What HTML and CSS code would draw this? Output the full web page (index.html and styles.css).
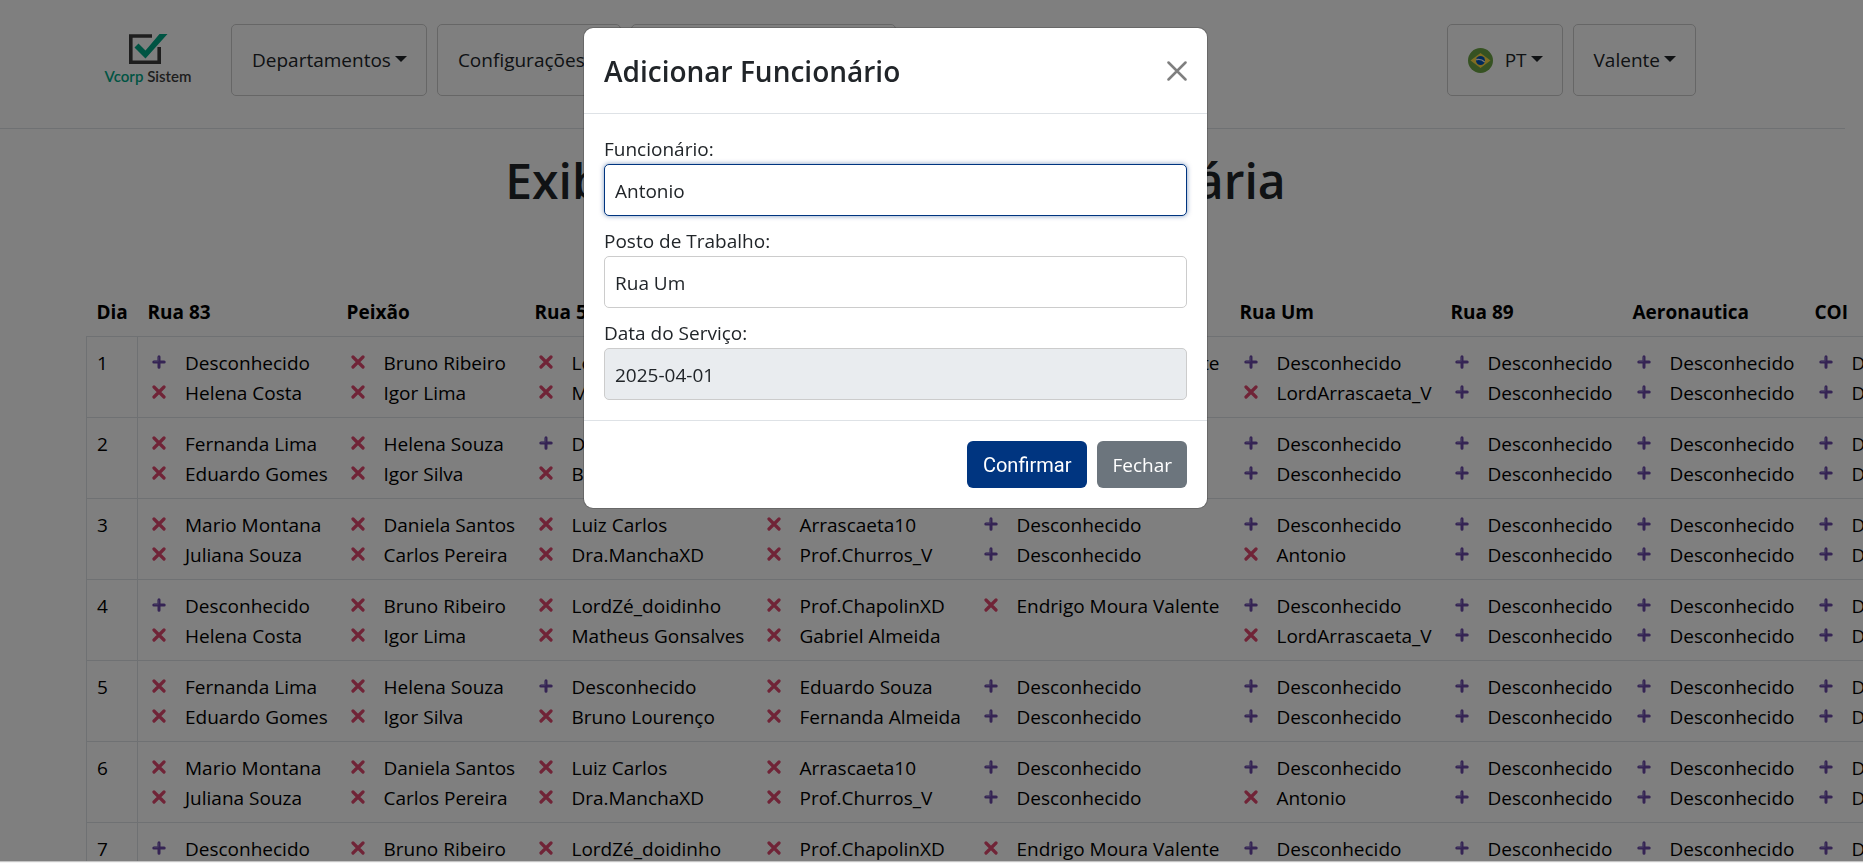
FILE: index.html
```html
<!DOCTYPE html>
<html lang="pt-BR">
<head>
<meta charset="utf-8">
<title>Vcorp Sistem</title>
<link rel="stylesheet" href="styles.css">
</head>
<body>
<svg class="sprite" aria-hidden="true">
  <symbol id="remove" viewBox="0 0 14 14"><path d="M2 2 12 12M12 2 2 12" fill="none" stroke="#e0486e" stroke-width="3.2" stroke-linecap="round"/></symbol>
  <symbol id="add" viewBox="0 0 14 14"><path d="M7 1.8V12.2M1.8 7H12.2" fill="none" stroke="#6a48a8" stroke-width="3" stroke-linecap="round"/><path d="M6.2 2V6.2H2" fill="none" stroke="#8b78c4" stroke-width="1"/></symbol>
</svg>
<header class="topbar">
  <nav class="nav">
    <a class="brand" href="#" aria-label="Vcorp Sistem">
      <svg class="brand-mark" viewBox="0 0 40 32" aria-hidden="true">
        <path d="M24 3H2.800V29.200H31.200V14" fill="none" stroke="#3c3c3c" stroke-width="3.6"/>
        <path d="M6.500 14.500 10.500 10.500 17.500 17.500 31.500 1H39.500L17.500 25.500Z" fill="#00a887"/>
      </svg>
      <span class="brand-name"><span class="brand-green">Vcorp</span> Sistem</span>
    </a>
    <div class="menu">
      <button class="menu-btn" type="button">Departamentos<span class="caret"></span></button>
      <button class="menu-btn" type="button">Configurações<span class="caret"></span></button>
      <button class="menu-btn" type="button">Gestão de Funcionários<span class="caret"></span></button>
    </div>
    <div class="menu">
      <button class="menu-btn" type="button">
        <svg class="flag" viewBox="0 0 25 25" aria-hidden="true"><circle cx="12.500" cy="12.500" r="12.500" fill="#6da544"/><path d="M12.500 5 22.500 12.500 12.500 20 2.500 12.500Z" fill="#ffda44"/><circle cx="12.500" cy="12.500" r="4.500" fill="#0052b4"/><path d="M8.200 11.700Q13 10.500 16.700 14" fill="none" stroke="#f0f0f0" stroke-width="1.400"/></svg>PT<span class="caret"></span></button>
      <button class="menu-btn" type="button">Valente<span class="caret"></span></button>
    </div>
  </nav>
</header>
<main class="page">
  <h1 class="page-title">Exibição da Escala de Posto Diária</h1>
  <table class="roster">
    <colgroup><col class="c-day"><col class="c1"><col class="c2"><col class="c3"><col class="c4"><col class="c5"><col class="c6"><col class="c7"><col class="c7"><col class="c7"></colgroup>
    <thead><tr><th>Dia</th><th>Rua 83</th><th>Peixão</th><th>Rua 55</th><th>Rua 60</th><th>Rua 70</th><th>Rua Um</th><th>Rua 89</th><th>Aeronautica</th><th>COI</th></tr></thead>
    <tbody id="rows"></tbody>
  </table>
</main>
<div class="backdrop">
  <section class="modal" role="dialog" aria-labelledby="dlg-title">
    <div class="modal-head">
      <h2 class="modal-title" id="dlg-title">Adicionar Funcionário</h2>
      <button class="close" type="button" aria-label="Close"><svg viewBox="0 0 20 20" aria-hidden="true"><path d="M1.500 1.500 18.500 18.500M18.500 1.500 1.500 18.500" fill="none" stroke="#7f7f7f" stroke-width="2.500" stroke-linecap="round"/></svg></button>
    </div>
    <form class="modal-body">
      <div class="field"><label for="func">Funcionário:</label><input class="is-active" id="func" type="text" value="Antonio"></div>
      <div class="field"><label for="posto">Posto de Trabalho:</label><input id="posto" type="text" value="Rua Um"></div>
      <div class="field"><label for="data">Data do Serviço:</label><input id="data" type="text" value="2025-04-01" disabled></div>
    </form>
    <div class="modal-foot">
      <button class="btn btn-primary" type="button">Confirmar</button>
      <button class="btn btn-muted" type="button">Fechar</button>
    </div>
  </section>
</div>
<script src="script.js"></script>
</body>
</html>
```
FILE: styles.css
```css
* { box-sizing: border-box; }
html { height: 100%; overflow: hidden; background: #fff; }
body { margin: 0; height: 100%; overflow: hidden; background: #fff; color: #000; font-family: "Segoe UI", "Open Sans", "Noto Sans", sans-serif; font-size: 19px; line-height: 30px; }
button, input { font: inherit; color: inherit; }
.sprite { position: absolute; width: 0; height: 0; }

.topbar { margin-right: 18px; border-bottom: 1px solid #dee2e6; }
.nav { display: flex; align-items: center; margin: 0 149px 0 103px; padding: 24px 0 32px; }
.brand { display: flex; flex-direction: column; align-items: center; width: 90px; margin-right: 38px; color: #3c3c3c; text-decoration: none; }
.brand-mark { width: 40px; height: 32px; }
.brand-name { font: 600 15px/22px Lato, sans-serif; white-space: nowrap; }
.brand-green { color: #00a887; }
.menu { display: flex; gap: 10px; }
.menu:last-child { margin-left: auto; }
.menu-btn { display: flex; align-items: center; height: 72px; padding: 0 19px 0 20px; border: 1px solid #ccc; border-radius: 5px; background: none; color: #212529; white-space: nowrap; }
.caret { margin: 0 0 2px 4px; border: 6px solid transparent; border-top-color: #212529; border-bottom: 0; }
.flag { width: 25px; height: 25px; margin-right: 12px; }

.page { padding: 22px 0 0 86px; }
.page-title { margin: 0 158px 81px 0; color: #212529; font-size: 48px; font-weight: 600; line-height: 60px; text-align: center; }
.roster { width: 1900px; table-layout: fixed; border-collapse: collapse; }
.roster th, .roster td { height: 81px; padding: 11px 10px 9px; text-align: left; vertical-align: top; white-space: nowrap; }
.roster th { height: 44px; padding: 5px 10px 9px; font-weight: 700; }
.roster td { border-top: 1px solid #dee2e6; }
.roster td:first-child { border-left: 1px solid #dee2e6; border-right: 1px solid #dee2e6; }
.c-day { width: 51px; }
.c1 { width: 199px; }
.c2 { width: 188px; }
.c3 { width: 228px; }
.c4 { width: 217px; }
.c5 { width: 260px; }
.c6 { width: 211px; }
.c7 { width: 182px; }
.person { display: flex; align-items: center; height: 30px; }
.person button { display: flex; flex: none; width: 37px; padding: 0 0 2px 4px; border: 0; background: none; }
.person svg { width: 14px; height: 14px; }

.backdrop { position: fixed; inset: 0 0 2px; display: flex; justify-content: center; align-items: flex-start; padding: 27px 72px 0 0; background: rgba(0, 0, 0, .5); box-shadow: 0 1px 0 #c4c4c4, 0 2px 0 #f3f3f3; }
.modal { width: 625px; border: 1px solid rgba(0, 0, 0, .18); border-radius: 10px; background: #fff; background-clip: padding-box; color: #212529; }
.modal-head { display: flex; justify-content: space-between; align-items: center; height: 86px; padding: 0 20px; border-bottom: 1px solid #dee2e6; }
.modal-title { margin: 0; font-size: 28px; font-weight: 600; line-height: 42px; }
.close { display: flex; padding: 0; border: 0; background: none; }
.close svg { width: 20px; height: 20px; }
.modal-body { display: grid; gap: 10px; padding: 20px; border-bottom: 1px solid #dee2e6; }
.field { display: flex; flex-direction: column; }
.field input { height: 52px; padding: 1px 10px 0; border: 1px solid #ccc; border-radius: 5px; background: #fff; }
.field input.is-active { border-color: #003580; box-shadow: 0 0 5px rgba(0, 53, 128, .5); }
.field input:disabled { background: #e9ecef; }
.modal-foot { display: flex; justify-content: flex-end; gap: 10px; padding: 20px; }
.btn { height: 47px; padding: 0 16px; border: 0; border-radius: 6px; color: #fff; }
.btn-primary { background: #003580; font-family: Roboto, sans-serif; font-size: 20px; }
.btn-muted { padding: 0 15px; background: #6c757d; }
```
FILE: script.js
```js
const U = "Desconhecido";
const patterns = [
  [[U, "Helena Costa"], ["Bruno Ribeiro", "Igor Lima"], ["LordZé_doidinho", "Matheus Gonsalves"], ["Prof.ChapolinXD", "Gabriel Almeida"], ["Endrigo Moura Valente"], [U, "LordArrascaeta_V"]],
  [["Fernanda Lima", "Eduardo Gomes"], ["Helena Souza", "Igor Silva"], [U, "Bruno Lourenço"], ["Eduardo Souza", "Fernanda Almeida"], [U, U], [U, U]],
  [["Mario Montana", "Juliana Souza"], ["Daniela Santos", "Carlos Pereira"], ["Luiz Carlos", "Dra.ManchaXD"], ["Arrascaeta10", "Prof.Churros_V"], [U, U], [U, "Antonio"]]
];
const person = name => {
  const kind = name === U ? "add" : "remove";
  const label = name === U ? "Adicionar" : "Remover";
  return `<div class="person"><button type="button" aria-label="${label}"><svg aria-hidden="true"><use href="#${kind}"/></svg></button>${name}</div>`;
};
let html = "";
for (let day = 1; day <= 7; day++) {
  const cells = [...patterns[(day - 1) % 3], [U, U], [U, U], [U, U]];
  html += `<tr><td>${day}</td>${cells.map(c => `<td>${c.map(person).join("")}</td>`).join("")}</tr>`;
}
document.getElementById("rows").innerHTML = html;
```
